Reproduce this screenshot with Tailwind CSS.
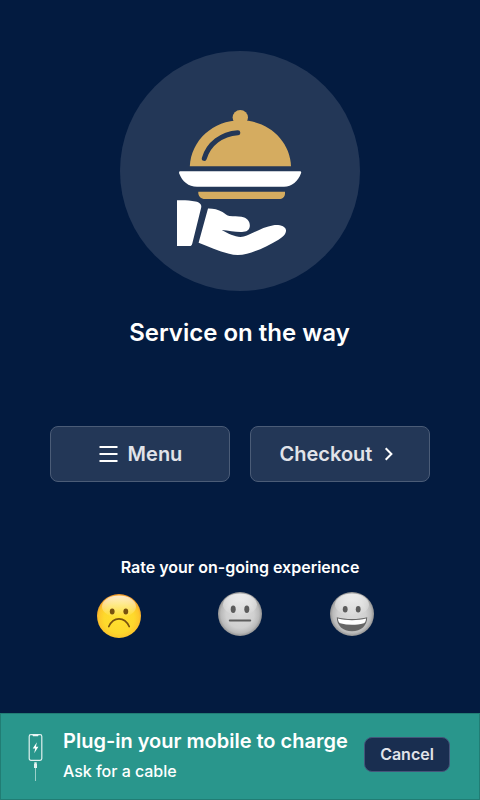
<!DOCTYPE html>
<html lang="en">
<head>
<meta charset="utf-8">
<title>Service on the way</title>
<script src="https://cdn.jsdelivr.net/npm/@tailwindcss/browser@4"></script>
</head>
<body class="bg-[#031b40]">
<div class="w-[480px] h-[800px] overflow-hidden flex flex-col bg-[#031b40] text-white font-['Inter',sans-serif]">
  <main class="flex-1 flex flex-col items-center pt-[51px]">
    <div class="size-60 shrink-0 rounded-full bg-[#233757]">
      <svg class="size-60" viewBox="120 51 240 240" fill="#fff">
        <g fill="#d5ac60">
          <circle cx="240.3" cy="117.6" r="7.7"/>
          <path d="M189.800 166.300C191 140.500 213 120.300 240.500 120.300S290 140.500 291 166.300Z"/>
          <path d="M198.300 191.700H285V193.500C285 197 282.500 199 279 199H205C201 199 198.300 196.500 198.300 192.500Z"/>
        </g>
        <path d="M204.300 158.400C208.500 144 221.500 133.800 237.800 132.700" fill="none" stroke="#233757" stroke-width="5" stroke-linecap="round"/>
        <path d="M180.500 171.300H299.800C301 171.300 301.500 172.200 301 173.300C298 181.500 292 186.700 284 186.700H197C188.500 186.700 182.200 181.500 179.200 173.500C178.800 172.200 179.300 171.300 180.500 171.300Z"/>
        <path d="M177 200.300C184 199.900 190 200.500 195.500 201.500C199.500 202.300 202 204.500 201.200 207.500L192.300 243.500C191.800 245.500 191 246 189.500 246H177Z"/>
        <path d="M208 208.400C213 208.300 218 209.200 222.500 212C225 213.500 227 215.600 229.500 216C234 216.600 237 216 241.500 216.700C247 217.700 250.200 221.200 249.800 226.300C249.500 230.200 246.500 232 242 232C235 232.200 229 230.500 221.700 230C228 233.500 234.500 236.800 240.500 236.900C245 236.800 248.500 235 254 232.300C260 229.300 266.500 226.300 273.500 225.200C279.500 224.400 286.500 226.300 286 231C285.700 234.500 282.500 237.200 278.500 239.700C269 245.500 257 251.200 247 253.800C240.500 255.500 234.500 255.500 229 253.700C218 251 209 246.500 198.600 242.700Z"/>
      </svg>
    </div>
    <h1 class="mt-[26px] pr-px text-[24px] leading-8 font-semibold whitespace-nowrap">Service on the way</h1>
    <div class="mt-[77px] flex gap-5">
      <button class="w-[180px] h-14 rounded-lg border border-[#4b5c77] bg-[#233757] text-[#e1e3e9] text-[20px] font-semibold flex items-center justify-center gap-2.5 pl-px">
        <svg class="w-[19px] h-[18px]" viewBox="0 0 19 18" fill="#fff"><path d="M.5 1h18v2H.5zM.5 8h18v2H.5zM.5 15h18v2H.5z"/></svg>
        <span>Menu</span>
      </button>
      <button class="w-[180px] h-14 rounded-lg border border-[#4b5c77] bg-[#233757] text-[#e1e3e9] text-[20px] font-semibold flex items-center justify-center gap-2.5 pr-1">
        <span>Checkout</span>
        <svg class="size-3.5" viewBox="0 0 14 14" fill="none" stroke="#fff" stroke-width="2"><path d="M3.700 1.300L9.400 7L3.700 12.700"/></svg>
      </button>
    </div>
    <p class="mt-[73px] text-[16px] leading-6 font-semibold whitespace-nowrap">Rate your on-going experience</p>
    <div class="w-full flex mt-[13px] pl-[97px]">
      <svg class="size-11 mt-[2px]" viewBox="0 0 44 44">
        <defs>
          <radialGradient id="y" cx=".5" cy=".55" r=".56"><stop offset="0" stop-color="#ffe02f"/><stop offset=".6" stop-color="#fed92c"/><stop offset=".82" stop-color="#fdc62b"/><stop offset="1" stop-color="#ef9029"/></radialGradient>
          <linearGradient id="h" x2="0" y2="1"><stop stop-color="#fff" stop-opacity=".75"/><stop offset="1" stop-color="#fff" stop-opacity="0"/></linearGradient>
          <radialGradient id="g" cx=".5" cy=".5" r=".53"><stop offset="0" stop-color="#dadada"/><stop offset=".6" stop-color="#d0d0d0"/><stop offset=".82" stop-color="#bababa"/><stop offset="1" stop-color="#808080"/></radialGradient>
        </defs>
        <circle cx="22" cy="22" r="22" fill="url(#y)"/>
        <ellipse cx="22" cy="12.500" rx="17" ry="11" fill="url(#h)"/>
        <g fill="#78520f"><ellipse cx="15.200" cy="17.500" rx="2.400" ry="3"/><ellipse cx="28.800" cy="17.500" rx="2.400" ry="3"/></g>
        <path d="M11.800 32.500C16.500 22.300 27.500 22.300 32.200 32.500" fill="none" stroke="#78520f" stroke-width="1.700" stroke-linecap="round"/>
      </svg>
      <svg class="size-11 ml-[77px]" viewBox="0 0 44 44">
        <circle cx="22" cy="22" r="22" fill="url(#g)"/>
        <ellipse cx="22" cy="12.500" rx="17" ry="11" fill="url(#h)"/>
        <g fill="#5c5c5c"><ellipse cx="15.200" cy="17.300" rx="2.500" ry="3.700"/><ellipse cx="28.800" cy="17.300" rx="2.500" ry="3.700"/></g>
        <path d="M11.800 28.600H32.200" stroke="#5c5c5c" stroke-width="2" stroke-linecap="round"/>
      </svg>
      <svg class="size-11 ml-[68px]" viewBox="0 0 44 44">
        <circle cx="22" cy="22" r="22" fill="url(#g)"/>
        <ellipse cx="22" cy="12.500" rx="17" ry="11" fill="url(#h)"/>
        <g fill="#5c5c5c"><ellipse cx="15.200" cy="17.200" rx="2.400" ry="3.200"/><ellipse cx="28.200" cy="17.200" rx="2.400" ry="3.200"/></g>
        <path d="M6.800 25.200C15 27.600 29 27.600 37.200 25.200C37.200 33.500 31 39.300 22 39.300S6.800 33.500 6.800 25.200Z" fill="#666"/>
        <path d="M7.900 26.500C16 28.700 28 28.700 36.100 26.500C35.900 29 35 30.800 33.800 31.200C26 33.300 18 33.300 10.200 31.200C9 30.800 8.100 29 7.900 26.500Z" fill="#fff"/>
      </svg>
    </div>
  </main>
  <footer class="h-[87px] shrink-0 border border-[#217d74] bg-[#29968c] flex pl-[27px] pr-[29px]">
    <svg class="w-4 h-[50px] mt-[19px] shrink-0" viewBox="0 0 16 50">
      <rect x="1.200" y="1.700" width="12.600" height="25.600" rx="1.700" fill="none" stroke="#dff0ee" stroke-width="1.200"/>
      <path d="M4.200 1.500H10.800L10 3.200H5Z" fill="#eff8f7"/>
      <path d="M8.900 9.300L4.700 15.500H7.200L6.200 20.300L10.400 13.800H7.900Z" fill="#fff"/>
      <path d="M6.300 29.300H8.700V31H9V35H6V31H6.300Z" fill="#e4f2f0"/>
      <path d="M7.500 35V48" stroke="#9bd0c9" stroke-width="1"/>
    </svg>
    <div class="ml-[19px] pt-[13px] whitespace-nowrap">
      <div class="text-[20px] leading-7 font-semibold">Plug-in your mobile to charge</div>
      <div class="mt-[4px] text-[16px] leading-6 font-medium tracking-[-0.03px]">Ask for a cable</div>
    </div>
    <button class="ml-auto mt-[23px] w-[86px] h-[35px] shrink-0 rounded-lg border border-[#45557a] bg-[#192e50] text-[#e1e3e9] text-[16px] leading-6 font-semibold pb-0.5">Cancel</button>
  </footer>
</div>
</body>
</html>
